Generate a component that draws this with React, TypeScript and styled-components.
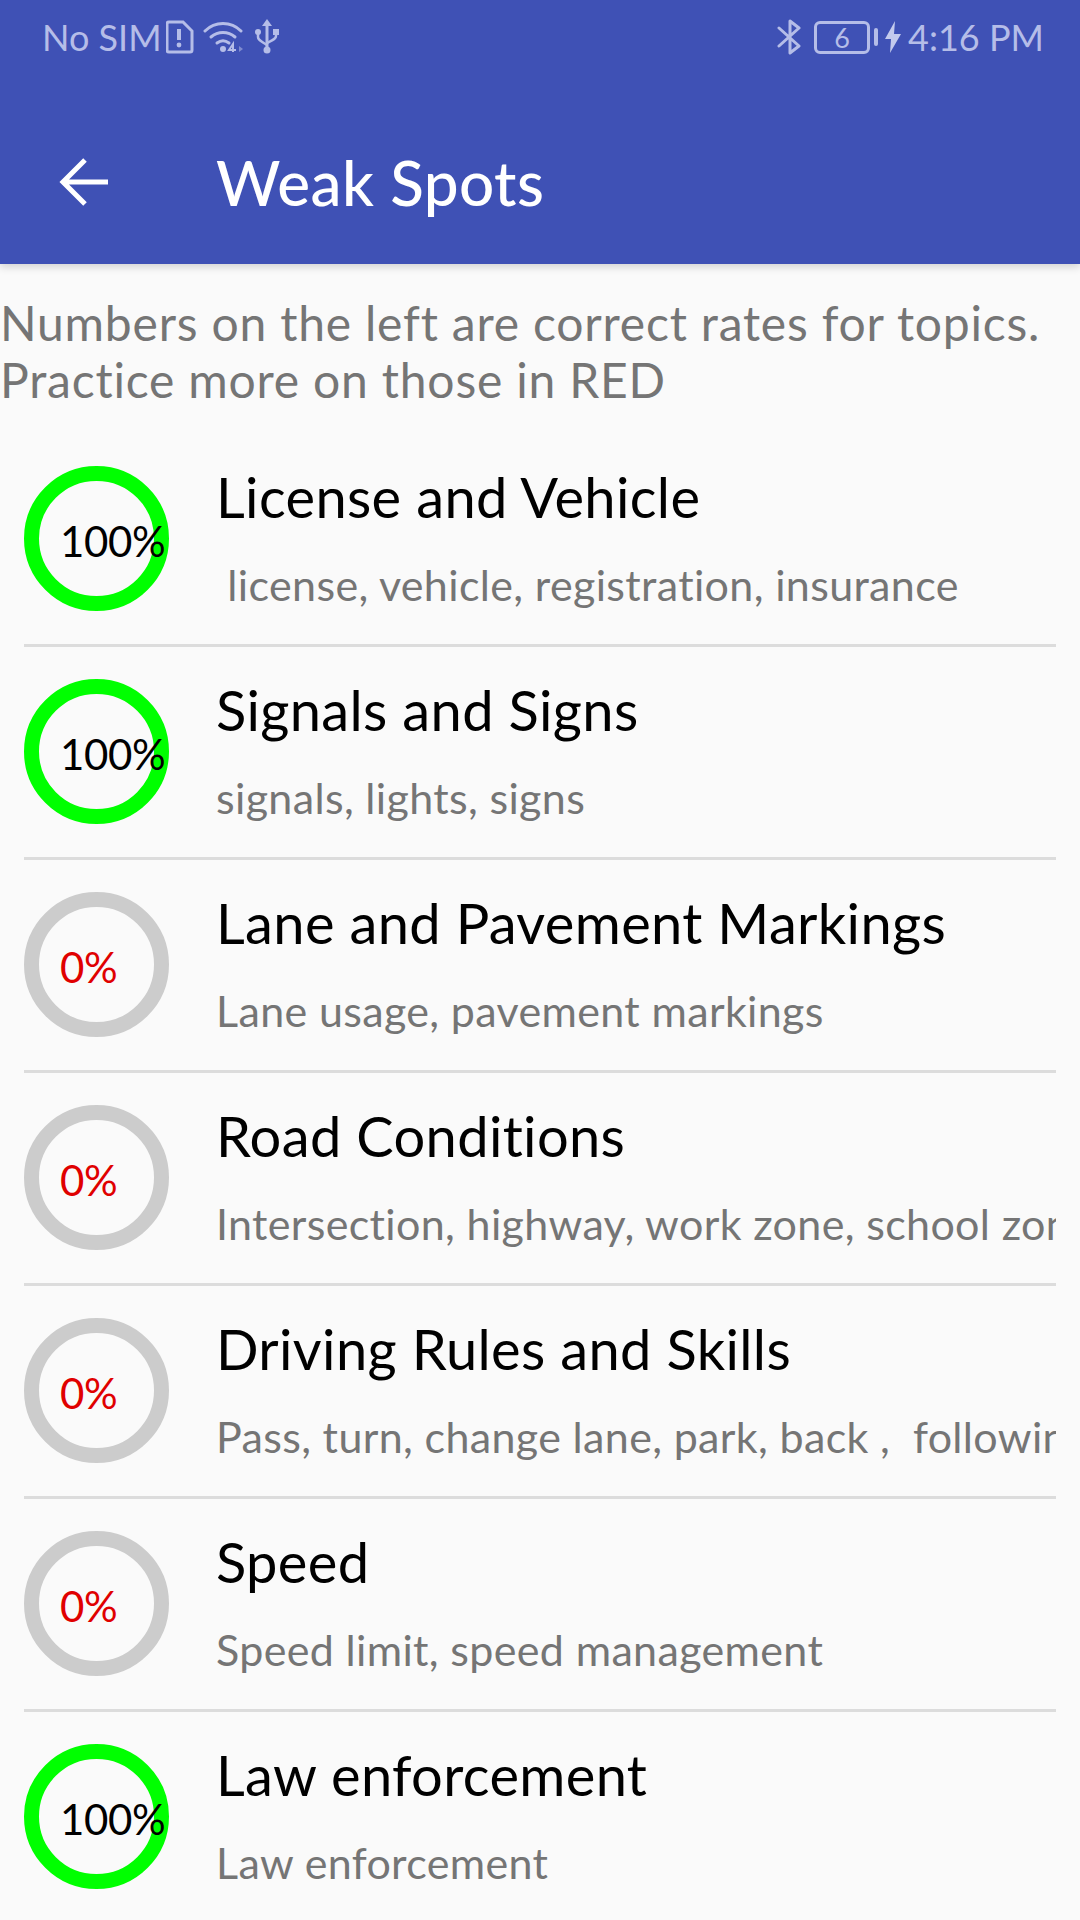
import styled, { createGlobalStyle } from "styled-components";

const topics = [
  { title: "License and Vehicle", sub: " license, vehicle, registration, insurance", rate: 100 },
  { title: "Signals and Signs", sub: "signals, lights, signs", rate: 100 },
  { title: "Lane and Pavement Markings", sub: "Lane usage, pavement markings", rate: 0 },
  { title: "Road Conditions", sub: "Intersection, highway, work zone, school zone", rate: 0 },
  { title: "Driving Rules and Skills", sub: "Pass, turn, change lane, park, back ,  following distance", rate: 0 },
  { title: "Speed", sub: "Speed limit, speed management", rate: 0 },
  { title: "Law enforcement", sub: "Law enforcement", rate: 100 },
];

const GlobalStyle = createGlobalStyle`
  html, body {
    margin: 0;
    padding: 0;
    background: #fafafa;
  }
  * {
    box-sizing: border-box;
  }
`;

const Page = styled.div`
  width: 1080px;
  height: 1920px;
  overflow: hidden;
  background: #fafafa;
  font-family: "Lato", "Noto Sans", sans-serif;
  font-variant-ligatures: none;
`;

const Header = styled.header`
  height: 264px;
  background: #3f51b5;
  box-shadow: 0 3px 8px rgba(0, 0, 0, 0.16);
  position: relative;
`;

const StatusBar = styled.div`
  height: 74px;
  padding: 0 36px 0 42px;
  display: flex;
  align-items: center;
  justify-content: space-between;
  color: #b5bde8;
  font-size: 36px;
`;

const StatusGroup = styled.div`
  display: flex;
  align-items: center;
`;

const Toolbar = styled.div`
  height: 108px;
  margin-top: 54px;
  display: flex;
  align-items: center;
  color: #fff;
`;

const BackButton = styled.div`
  width: 216px;
  padding-left: 59px;
  display: flex;
  align-items: center;
`;

const Title = styled.h1`
  margin: 0;
  font-size: 62px;
  font-weight: 500;
  letter-spacing: 0.4px;
`;

const Intro = styled.p`
  margin: 0;
  height: 170px;
  padding: 30px 0 0;
  font-size: 48px;
  line-height: 57px;
  letter-spacing: 0.8px;
  color: #757575;
`;

const Row = styled.div`
  height: 213px;
  margin: 0 24px;
  padding-top: 32px;
  display: flex;
  border-bottom: 3px solid #dcdcdc;
  &:last-child {
    border-bottom: none;
  }
`;

const Ring = styled.div<{ $done: boolean }>`
  width: 145px;
  height: 145px;
  flex: none;
  border-radius: 50%;
  border: 15px solid ${({ $done }) => ($done ? "#00ff00" : "#cccccc")};
  padding: 35px 0 0 21px;
`;

const Rate = styled.span<{ $done: boolean }>`
  display: block;
  font-size: 42px;
  line-height: 50px;
  letter-spacing: -0.4px;
  color: ${({ $done }) => ($done ? "#000" : "#e00000")};
`;

const RowBody = styled.div`
  margin-left: 47px;
  min-width: 0;
  flex: 1;
`;

const RowTitle = styled.div`
  font-size: 56px;
  line-height: 62px;
  letter-spacing: 0.35px;
  color: #000;
`;

const RowSub = styled.div`
  margin-top: 32px;
  font-size: 43px;
  line-height: 50px;
  letter-spacing: 0.35px;
  color: #757575;
  white-space: pre;
  overflow: hidden;
`;

function SimIcon() {
  return (
    <svg width="28" height="34" viewBox="0 0 28 34" style={{ marginLeft: 4 }}>
      <path d="M3 2h14l9 9v19a2 2 0 0 1-2 2H3a2 2 0 0 1-2-2V4a2 2 0 0 1 2-2z" fill="none" stroke="#b5bde8" strokeWidth="3" />
      <path d="M13 9v11" stroke="#b5bde8" strokeWidth="4" />
      <circle cx="13" cy="25" r="2.4" fill="#b5bde8" />
    </svg>
  );
}

function WifiIcon() {
  return (
    <svg width="42" height="34" viewBox="0 0 42 34" style={{ marginLeft: 9 }}>
      <g fill="none" stroke="#b5bde8" strokeWidth="3" strokeLinecap="round">
        <path d="M2 11C12 1 28 1 38 11" />
        <path d="M8 17c7-6 17-6 24 0" />
        <path d="M14 23c4-3 8-3 12 0" />
      </g>
      <circle cx="20" cy="29" r="3" fill="#b5bde8" />
      <path d="M30 32v-8l-4 6h7" fill="none" stroke="#b5bde8" strokeWidth="2" />
      <path d="M36 26l4 3-4 3z" fill="#7f8bcf" />
    </svg>
  );
}

function UsbIcon() {
  return (
    <svg width="24" height="36" viewBox="0 0 24 36" style={{ marginLeft: 10 }}>
      <path d="M12 3v28" stroke="#b5bde8" strokeWidth="3" />
      <path d="M12 0l5 7H7z" fill="#b5bde8" />
      <circle cx="12" cy="31" r="3.5" fill="#b5bde8" />
      <path d="M3 14v4c0 3 3 4 9 8" fill="none" stroke="#b5bde8" strokeWidth="2.5" />
      <path d="M21 14v3c0 3-3 4-9 7" fill="none" stroke="#b5bde8" strokeWidth="2.5" />
      <circle cx="3" cy="13" r="3" fill="#b5bde8" />
      <rect x="18" y="10" width="6" height="6" fill="#b5bde8" />
    </svg>
  );
}

function BluetoothIcon() {
  return (
    <svg width="24" height="36" viewBox="0 0 24 36">
      <path
        d="M2 9l20 18-9 7V2l9 7L2 27"
        fill="none"
        stroke="#b5bde8"
        strokeWidth="3"
        strokeLinejoin="round"
        strokeLinecap="round"
      />
    </svg>
  );
}

const Battery = styled.div`
  width: 56px;
  height: 33px;
  margin-left: 13px;
  border: 3px solid #b5bde8;
  border-radius: 6px;
  display: flex;
  align-items: center;
  justify-content: center;
  font-size: 27px;
  line-height: 1;
`;

const BatteryTip = styled.div`
  width: 4px;
  height: 18px;
  margin-left: 4px;
  background: #b5bde8;
  border-radius: 2px;
`;

function BoltIcon() {
  return (
    <svg width="16" height="32" viewBox="0 0 16 32" style={{ marginLeft: 7, marginRight: 7 }}>
      <path d="M10 0L0 18h6L5 32 16 13h-7z" fill="#c3caed" />
    </svg>
  );
}

export default function App() {
  return (
    <Page>
      <GlobalStyle />
      <Header>
        <StatusBar>
          <StatusGroup>
            No SIM
            <SimIcon />
            <WifiIcon />
            <UsbIcon />
          </StatusGroup>
          <StatusGroup>
            <BluetoothIcon />
            <Battery>6</Battery>
            <BatteryTip />
            <BoltIcon />
            4:16 PM
          </StatusGroup>
        </StatusBar>
        <Toolbar>
          <BackButton>
            <svg width="50" height="48" viewBox="0 0 50 48">
              <path d="M49 24H4M26 2L4 24l22 22" fill="none" stroke="#fff" strokeWidth="5" />
            </svg>
          </BackButton>
          <Title>Weak Spots</Title>
        </Toolbar>
      </Header>
      <Intro>
        Numbers on the left are correct rates for topics.
        <br />
        Practice more on those in RED
      </Intro>
      {topics.map((topic) => (
        <Row key={topic.title}>
          <Ring $done={topic.rate === 100}>
            <Rate $done={topic.rate === 100}>{topic.rate}%</Rate>
          </Ring>
          <RowBody>
            <RowTitle>{topic.title}</RowTitle>
            <RowSub>{topic.sub}</RowSub>
          </RowBody>
        </Row>
      ))}
    </Page>
  );
}
